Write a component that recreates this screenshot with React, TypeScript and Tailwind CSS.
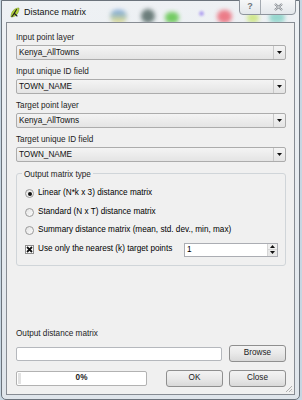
import * as React from "react";

// ============================================================================
// SMALL WIDGETS (Windows 7 style Qt dialog)
// ============================================================================

const ComboBox = ({ value }: { value: string }) => (
  <div className="flex h-[15px] items-stretch rounded-[2px] border border-[#acacac] bg-gradient-to-b from-[#f4f4f4] to-[#e4e4e4]">
    <span className="flex-1 pl-[2px] leading-[13px] text-[#111]">{value}</span>
    <span className="flex w-[12px] items-center justify-center border-l border-[#c8c8c8]">
      <svg width="5" height="3" viewBox="0 0 5 3">
        <path d="M0 0h5L2.5 3z" fill="#111" />
      </svg>
    </span>
  </div>
);

const Field = ({ label, value }: { label: string; value: string }) => (
  <div className="flex flex-col">
    <span className="h-[11px] leading-[11px] text-[#1e1e1e]">{label}</span>
    <div className="mt-[2px]">
      <ComboBox value={value} />
    </div>
  </div>
);

const Radio = ({ checked }: { checked?: boolean }) => (
  <span className="flex h-[9px] w-[9px] items-center justify-center rounded-full border border-[#9a9a9a] bg-gradient-to-br from-[#e4e4e4] to-[#fbfbfb]">
    {checked && <span className="h-[4px] w-[4px] rounded-full bg-[#111]" />}
  </span>
);

const Button = ({ children, className }: { children: React.ReactNode; className?: string }) => (
  <div
    className={`flex h-[17px] items-center justify-center rounded-[3px] border border-[#8f8f8f] bg-gradient-to-b from-[#f3f3f3] via-[#e9e9e9] to-[#d9d9d9] text-[#1a1a1a] ${className ?? ""}`}
  >
    {children}
  </div>
);

const QgisIcon = () => (
  <svg width="10" height="11" viewBox="0 0 10 11">
    <path d="M1 10C1 5 4 1 9 1C9 6 6 10 1 10z" fill="#b5d43a" stroke="#7a9a1c" strokeWidth="0.6" />
    <path d="M2 9.5C4 7 5 5 6.5 2.5M4.5 6.5L7 9" stroke="#222" strokeWidth="1.1" fill="none" strokeLinecap="round" />
  </svg>
);

// ============================================================================
// APP
// ============================================================================

export default function App() {
  return (
    <div
      className="relative h-[400px] w-[302px] overflow-hidden bg-[#c7d6e2] text-[8.2px]"
      style={{ fontFamily: '"Liberation Sans", Arial, sans-serif' }}
    >
      {/* window frame */}
      <div className="ml-px flex h-[400px] w-[299px] flex-col rounded-b-[5px] border border-[#6b737c] bg-gradient-to-b from-[#eef1f4] to-[#dfe5eb]">
        {/* title bar */}
        <div className="relative flex h-[21px] items-start">
          {/* blurred desktop icons behind the glass */}
          <span className="absolute left-[108px] top-[9px] h-[13px] w-[17px] rounded-full bg-gradient-to-b from-[#5d93d6] to-[#ece06a] opacity-85 blur-[2px]" />
          <span className="absolute left-[139px] top-[8px] h-[14px] w-[14px] rounded-full bg-[#4d625e] opacity-80 blur-[2px]" />
          <span className="absolute left-[163px] top-[11px] h-[11px] w-[14px] rounded-full bg-[#55c23e] opacity-80 blur-[2px]" />
          <span className="absolute left-[197px] top-[10px] h-[5px] w-[5px] rounded-full bg-[#a998f0] opacity-80 blur-[1px]" />
          <span className="absolute left-[215px] top-[9px] h-[13px] w-[15px] rounded-full bg-[#ec5f6e] opacity-80 blur-[2px]" />
          <span className="absolute left-[245px] top-[12px] h-[10px] w-[12px] rounded-full bg-[#c4e460] opacity-70 blur-[2px]" />
          <span className="absolute left-[267px] top-[11px] h-[11px] w-[16px] rounded-full bg-[#72cdbf] opacity-70 blur-[2px]" />

          <span className="relative ml-[8px] mt-[6px]">
            <QgisIcon />
          </span>
          <span className="relative ml-[4px] mt-[6px] text-[9px] leading-[11px] text-[#111]">Distance matrix</span>

          {/* caption buttons */}
          <div className="relative ml-auto mr-[3px] mt-[-2px] flex h-[16px] overflow-hidden rounded-b-[4px] border border-[#8d949c] bg-gradient-to-b from-[#f6f7f8] to-[#e3e7eb]">
            <span className="flex w-[21px] items-center justify-center border-r border-[#a3a9b0] text-[9px] font-bold text-[#6f757b]">?</span>
            <span className="flex w-[34px] items-center justify-center">
              <svg width="9" height="8" viewBox="0 0 9 8">
                <path d="M1 1l7 6M8 1L1 7" stroke="#7b8187" strokeWidth="2.2" fill="none" />
                <path d="M1 1l7 6M8 1L1 7" stroke="#f4f5f6" strokeWidth="0.8" fill="none" />
              </svg>
            </span>
          </div>
        </div>

        {/* client area */}
        <div className="relative mx-[4px] mb-[4px] flex flex-1 flex-col border border-[#878c93] bg-[#f0f0f0] pb-[7px] pl-[9px] pr-[8px] pt-[9px]">
          <div className="flex flex-col gap-[6px]">
            <Field label="Input point layer" value="Kenya_AllTowns" />
            <Field label="Input unique ID field" value="TOWN_NAME" />
            <Field label="Target point layer" value="Kenya_AllTowns" />
            <Field label="Target unique ID field" value="TOWN_NAME" />
          </div>

          {/* group box */}
          <div className="relative mt-[11px] rounded-[3px] border border-[#d0d5d9] pb-[6px] pl-[8px] pr-[7px] pt-[10px]">
            <span className="absolute left-[5px] top-[-5px] bg-[#f0f0f0] px-[2px] leading-[11px] text-[#1e1e1e]">
              Output matrix type
            </span>
            <div className="flex h-[19px] items-center gap-[4px]">
              <Radio checked />
              <span>Linear (N*k x 3) distance matrix</span>
            </div>
            <div className="flex h-[18px] items-center gap-[4px]">
              <Radio />
              <span>Standard (N x T) distance matrix</span>
            </div>
            <div className="flex h-[19px] items-center gap-[4px]">
              <Radio />
              <span>Summary distance matrix (mean, std. dev., min, max)</span>
            </div>
            <div className="flex h-[19px] items-center gap-[4px]">
              <span className="flex h-[9px] w-[9px] items-center justify-center border border-[#8e8e8e] bg-white">
                <svg width="7" height="7" viewBox="0 0 7 7">
                  <path d="M1 1l5 5M6 1L1 6" stroke="#111" strokeWidth="1.8" />
                </svg>
              </span>
              <span>Use only the nearest (k) target points</span>
              <div className="ml-auto flex h-[14px] w-[94px] items-stretch border border-[#abadb3] bg-white">
                <span className="flex-1 pl-[2px] leading-[12px]">1</span>
                <div className="flex w-[10px] flex-col border-l border-[#d6d6d6]">
                  <span className="flex flex-1 items-center justify-center border-b border-[#d6d6d6] bg-[#f0f0f0]">
                    <svg width="5" height="3" viewBox="0 0 5 3">
                      <path d="M0 3h5L2.5 0z" fill="#111" />
                    </svg>
                  </span>
                  <span className="flex flex-1 items-center justify-center bg-[#e8e8e8]">
                    <svg width="5" height="3" viewBox="0 0 5 3">
                      <path d="M0 0h5L2.5 3z" fill="#111" />
                    </svg>
                  </span>
                </div>
              </div>
            </div>
          </div>

          <div className="flex-1" />

          <span className="h-[11px] leading-[11px] text-[#1e1e1e]">Output distance matrix</span>
          <div className="mt-[6px] flex h-[17px] items-center gap-[7px]">
            <div className="h-[14px] flex-1 rounded-[2px] border border-[#b5b8bd] bg-white" />
            <Button className="w-[57px]">Browse</Button>
          </div>
          <div className="mt-[8px] flex h-[17px] items-center">
            <div className="relative flex h-[15px] w-[131px] items-center justify-center rounded-[2px] border border-[#b2b2b2] bg-white">
              <span className="absolute bottom-[1px] left-[1px] top-[1px] w-[3px] bg-[#e2e2e2]" />
              <span className="relative font-bold text-[#222]">0%</span>
            </div>
            <Button className="ml-[19px] w-[57px]">OK</Button>
            <Button className="ml-[6px] w-[57px]">Close</Button>
          </div>

          {/* size grip */}
          <svg className="absolute bottom-[1px] right-[1px]" width="8" height="8" viewBox="0 0 8 8">
            <path d="M7 1L1 7M7 4L4 7M7 6.5L6.5 7" stroke="#a8a8a8" strokeWidth="0.9" />
          </svg>
        </div>
      </div>
    </div>
  );
}
